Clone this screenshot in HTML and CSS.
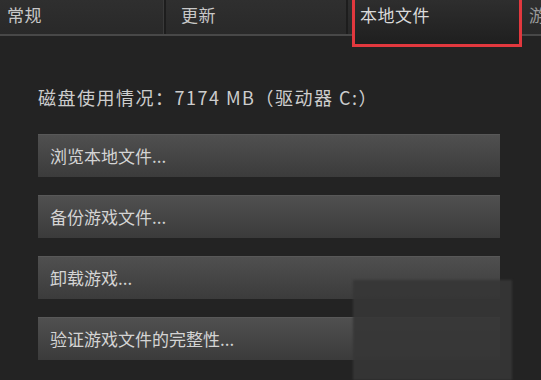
FILE: index.html
```html
<!DOCTYPE html>
<html lang="zh-CN">
<head>
<meta charset="utf-8">
<link rel="stylesheet" href="styles.css">
</head>
<body>
<div class="window">
  <div class="tabbar">
    <div class="tab tab-general">常规</div>
    <div class="tab tab-update">更新</div>
    <div class="tab tab-active">本地文件</div>
    <div class="tab tab-more">游</div>
  </div>
  <div class="content">
    <div class="disk">磁盘使用情况：7174 MB（驱动器 C:）</div>
    <div class="buttons">
      <div class="btn">浏览本地文件...</div>
      <div class="btn">备份游戏文件...</div>
      <div class="btn">卸载游戏...</div>
      <div class="btn">验证游戏文件的完整性...</div>
    </div>
  </div>
  <div class="watermark"></div>
</div>
</body>
</html>
```
FILE: styles.css
```css
html, body {
  margin: 0;
  padding: 0;
}
body {
  background: #232323;
  font-family: "Noto Sans CJK SC", "Noto Sans", sans-serif;
  color: #cfcfcf;
}
.window {
  position: relative;
  width: 541px;
  height: 380px;
  overflow: hidden;
  background: #232323;
}
.tabbar {
  display: flex;
  align-items: flex-start;
  height: 34px;
  background: linear-gradient(#2f2f2f, #292929);
  border-bottom: 2px solid #484848;
  position: relative;
  z-index: 2;
}
.tab {
  flex-shrink: 0;
  height: 34px;
  box-sizing: border-box;
  font-size: 17px;
  line-height: 20px;
  padding-top: 5px;
  color: #c8c8c8;
  letter-spacing: 0.5px;
}
.tab-general {
  width: 166px;
  padding-left: 7px;
  border-right: 2px solid #1d1d1d;
  box-shadow: inset -1px 0 0 #3a3a3a;
}
.tab-update {
  width: 180px;
  padding-left: 13px;
  margin-left: 2px;
  border-right: 2px solid #1d1d1d;
}
.tab-active {
  width: 170px;
  height: 50px;
  margin-left: 4px;
  margin-top: -3px;
  padding-top: 5px;
  padding-left: 5px;
  border: 3px solid #e2383e;
  background: linear-gradient(#2e2e2e, #1f1f1f);
  color: #dadada;
}
.tab-more {
  margin-left: 5px;
  padding-left: 2px;
  color: #9a9a9a;
}
.content {
  padding: 48px 0 0 38px;
}
.disk {
  font-size: 18px;
  line-height: 26px;
  letter-spacing: 1.5px;
  color: #cdcdcd;
}
.buttons {
  display: flex;
  flex-direction: column;
  gap: 18px;
  margin-top: 24px;
  width: 462px;
}
.btn {
  height: 43px;
  box-sizing: border-box;
  padding: 0 0 0 12px;
  display: flex;
  align-items: center;
  font-size: 17px;
  color: #d4d4d4;
  background: linear-gradient(#505050, #3b3b3b);
  box-shadow: inset 0 1px 0 #585858;
}
.watermark {
  position: absolute;
  left: 353px;
  top: 280px;
  width: 159px;
  height: 100px;
  background: rgba(54, 54, 54, 0.92);
  filter: blur(1px);
}
```
